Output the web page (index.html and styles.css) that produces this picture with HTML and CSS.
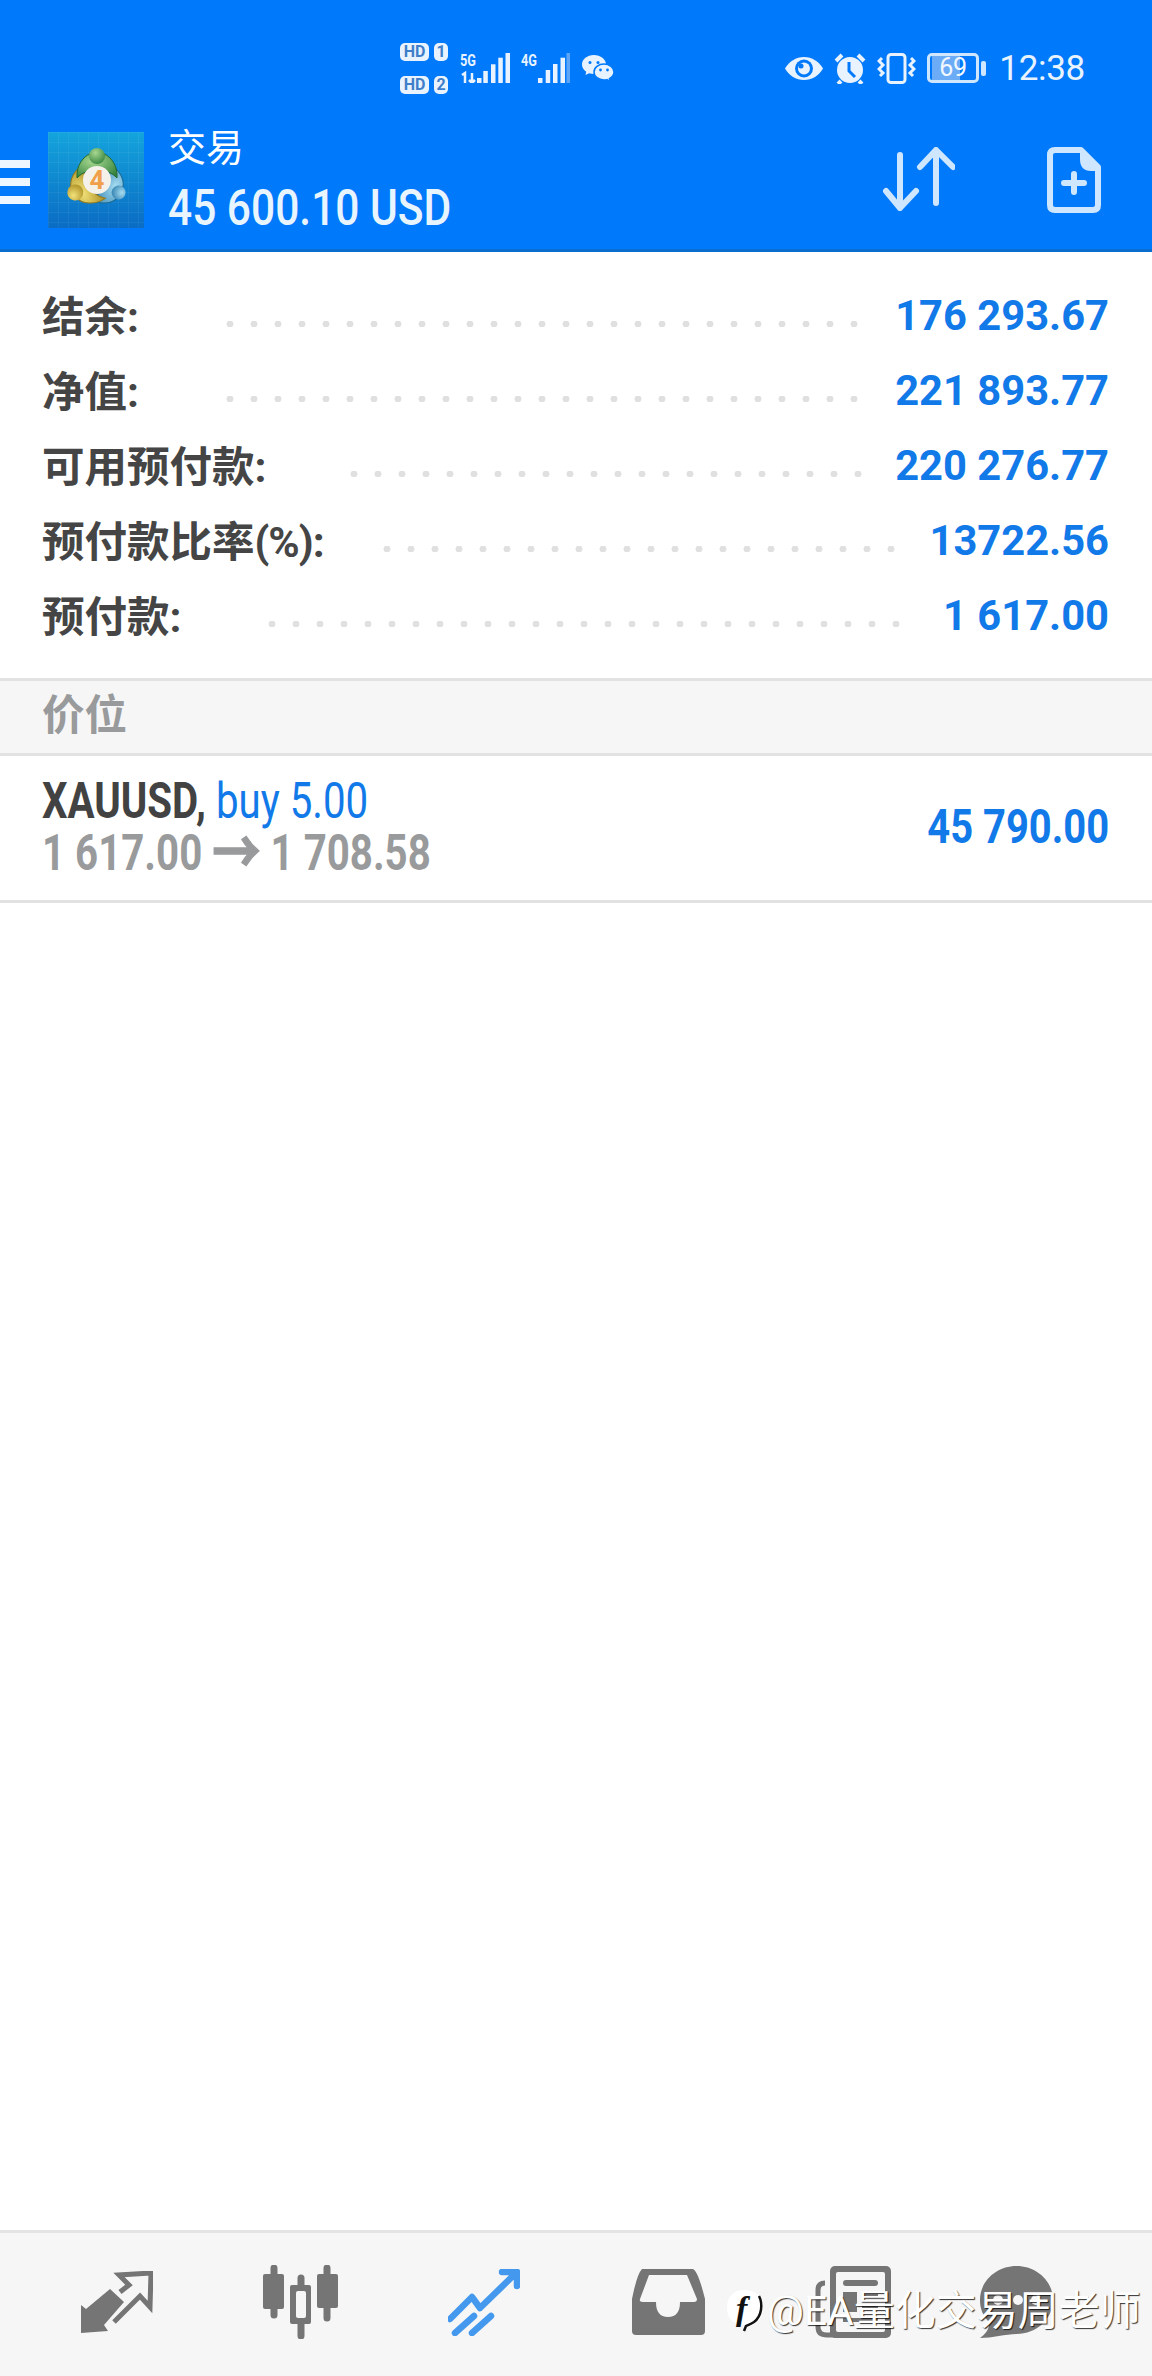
FILE: index.html
```html
<!DOCTYPE html>
<html lang="zh-CN">
<head>
  <meta charset="UTF-8">
  <title>交易</title>
  <link rel="stylesheet" href="styles.css">
</head>
<body>
  <header class="top">
    <div class="status">
      <div class="hd-col">
        <div class="hd-row"><span class="hd">HD</span><span class="sim">1</span></div>
        <div class="hd-row"><span class="hd">HD</span><span class="sim">2</span></div>
      </div>
      <svg class="signal" width="50" height="34" viewBox="0 -4 50 34">
        <text class="net" x="0" y="13" textLength="16" lengthAdjust="spacingAndGlyphs">5G</text>
        <path class="data" d="M2 22l3-2v10M12 20v10l-3-3M12 30l3-3"/>
        <rect x="17" y="25" width="4.5" height="5"/><rect x="23.3" y="18" width="4.5" height="12"/><rect x="31" y="11.3" width="4.5" height="18.7"/><rect x="38.3" y="4.7" width="4.5" height="25.3"/><rect x="45.5" y="0" width="4.5" height="30"/>
      </svg>
      <svg class="signal" width="50" height="34" viewBox="0 -4 50 34">
        <text class="net" x="0" y="13" textLength="16" lengthAdjust="spacingAndGlyphs">4G</text>
        <rect x="17" y="25" width="4.5" height="5"/><rect x="24.7" y="17" width="4.5" height="13"/><rect x="32" y="11" width="4.5" height="19"/><rect x="39.5" y="4.7" width="4.5" height="25.3"/><rect class="dim" x="45.5" y="0" width="3.5" height="30"/>
      </svg>
      <svg class="wechat" width="32" height="27" viewBox="0 0 32 27">
        <path class="ic" d="M12 0C5 0 0 4.300 0 9.500c0 3 1.600 5.500 4.200 7.200L3.500 20l3.600-1.800c1.500.4 3.200.7 4.900.7 6.500 0 12-4.200 12-9.400S18.500 0 12 0z"/>
        <circle class="eye-b" cx="8" cy="7.500" r="1.500"/><circle class="eye-b" cx="16" cy="7.500" r="1.500"/>
        <path class="ic wc2" d="M22 9c-5.500 0-10 3.500-10 8s4.500 8 10 8c1 0 2-.1 3-.4l3 2-.6-3c2.800-1.600 4.600-3.900 4.600-6.600 0-4.500-4.500-8-10-8z"/>
        <circle class="eye-b" cx="18.500" cy="15" r="1.400"/><circle class="eye-b" cx="25.500" cy="15" r="1.400"/>
      </svg>
      <div class="status-right">
        <svg width="38" height="23" viewBox="0 0 38 23">
          <path class="ic" d="M19 0C11 0 4 4.500 0 11.500 4 18.500 11 23 19 23s15-4.500 19-11.500C34 4.500 27 0 19 0z"/>
          <circle class="eye-b" cx="19" cy="11.500" r="9"/>
          <circle class="ic" cx="19" cy="11.500" r="6"/>
          <circle class="eye-b" cx="16" cy="9" r="2.500"/>
        </svg>
        <svg width="32" height="31" viewBox="0 0 32 31">
          <circle class="ic" cx="16" cy="17" r="13"/>
          <path class="alarm-hand" d="M15 9v9l6 6"/>
          <path class="alarm-ear" d="M2 8l6-6M30 8l-6-6M7 28l-3 3M25 28l3 3"/>
        </svg>
        <svg width="39" height="31" viewBox="0 0 39 31">
          <rect class="phone" x="11" y="1.500" width="17" height="28" rx="3"/>
          <path class="buzz" d="M5 5l-3 3 4 4-4 4 4 4-3 3M34 5l3 3-4 4 4 4-4 4 3 3"/>
        </svg>
        <div class="battery-wrap">
          <div class="battery"><span class="level"></span><span class="pct">69</span></div>
          <span class="nub"></span>
        </div>
        <span class="clock">12:38</span>
      </div>
    </div>
    <div class="appbar">
      <div class="burger"><span></span><span></span><span></span></div>
      <svg class="logo" width="96" height="96" viewBox="0 0 96 96">
        <defs>
          <linearGradient id="sky" x1="0" y1="0" x2="0" y2="1">
            <stop offset="0" stop-color="#14a4dc"/><stop offset="1" stop-color="#0a6cc4"/>
          </linearGradient>
          <pattern id="grid" width="10" height="10" patternUnits="userSpaceOnUse">
            <path d="M10 0H0V10" fill="none" stroke="#fff" stroke-opacity=".1"/>
          </pattern>
          <radialGradient id="gr" cx=".4" cy=".3" r=".8"><stop offset="0" stop-color="#a8d890"/><stop offset="1" stop-color="#2f7f3a"/></radialGradient>
          <radialGradient id="ye" cx=".4" cy=".3" r=".8"><stop offset="0" stop-color="#f2e27a"/><stop offset="1" stop-color="#a88a1e"/></radialGradient>
          <radialGradient id="bl" cx=".4" cy=".3" r=".8"><stop offset="0" stop-color="#a6dcf2"/><stop offset="1" stop-color="#2a7cac"/></radialGradient>
        </defs>
        <rect width="96" height="96" fill="url(#sky)"/>
        <rect width="96" height="96" fill="url(#grid)"/>
        <g transform="translate(49 48) rotate(120)">
          <path fill="url(#bl)" stroke="#1c6a94" d="M-20-2C-21-15-13-24-7-26-4-20 4-20 7-26 13-24 21-15 20-2 10-13-10-13-20-2Z"/>
          <circle cy="-25" r="7" fill="url(#bl)"/>
        </g>
        <g transform="translate(49 48) rotate(-120)">
          <path fill="url(#ye)" stroke="#94791a" d="M-20-2C-21-15-13-24-7-26-4-20 4-20 7-26 13-24 21-15 20-2 10-13-10-13-20-2Z"/>
          <circle cy="-25" r="8" fill="url(#ye)"/>
        </g>
        <g transform="translate(49 48)">
          <path fill="url(#gr)" stroke="#256b30" d="M-20-2C-21-15-13-24-7-26-4-20 4-20 7-26 13-24 21-15 20-2 10-13-10-13-20-2Z"/>
          <circle cy="-24" r="8" fill="url(#gr)"/>
        </g>
        <circle cx="49" cy="48" r="14" fill="#f4f1ea"/>
        <text class="logo-four" x="49" y="57">4</text>
      </svg>
      <div class="account">
        <div class="title">交易</div>
        <div class="amount"><span class="cond">45 600.10 USD</span></div>
      </div>
      <div class="actions">
        <svg width="73" height="64" viewBox="0 0 73 64">
          <path class="act" d="M18 8V61M4 44L18 61 34 44M54 3V56M38 20L54 3 71 20"/>
        </svg>
        <svg width="54" height="66" viewBox="0 0 54 66">
          <path class="act" d="M34 3H8Q3 3 3 8V58Q3 63 8 63H46Q51 63 51 58V20Z"/>
          <path class="fold" d="M33 3L51 21V24H44Q33 24 33 12Z"/>
          <path class="act" d="M27 27V45M17 36H37"/>
        </svg>
      </div>
    </div>
  </header>

  <main class="main">
    <section class="summary">
      <div class="row"><span class="label">结余:</span><span class="dots"></span><span class="value">176 293.67</span></div>
      <div class="row"><span class="label">净值:</span><span class="dots"></span><span class="value">221 893.77</span></div>
      <div class="row"><span class="label">可用预付款:</span><span class="dots dots-short"></span><span class="value">220 276.77</span></div>
      <div class="row"><span class="label">预付款比率<span class="paren">(%)</span>:</span><span class="dots dots-short dots-tight"></span><span class="value">13722.56</span></div>
      <div class="row"><span class="label">预付款:</span><span class="dots"></span><span class="value">1 617.00</span></div>
    </section>
    <div class="section-head">价位</div>
    <div class="position">
      <div>
        <div class="pos-line"><span class="cond cond-pos"><b>XAUUSD,</b> <span class="side">buy 5.00</span></span></div>
        <div class="pos-line prices"><span class="cond cond-pos">1 617.00 <span class="arrow">→</span> 1 708.58</span></div>
      </div>
      <div class="profit"><span class="cond cond-profit">45 790.00</span></div>
    </div>
  </main>

  <nav class="tabs">
    <svg width="73" height="63" viewBox="0 0 73 63">
      <path class="tab-fill" d="M1 34L6 38 30 18 44 31 24 54 28 60 1 62Z"/>
      <path class="tab-line" d="M40 21L49 14 39 4 71 2 70 36 60 25 34 51"/>
    </svg>
    <svg width="75" height="74" viewBox="0 0 75 74">
      <path class="tab-wick" d="M11 3V50M64 3V53M38 13V71"/>
      <rect class="tab-fill" x="0" y="9" width="21" height="35" rx="2"/>
      <rect class="tab-fill" x="54" y="9" width="21" height="34" rx="2"/>
      <rect class="tab-fill" x="27" y="20" width="21" height="39" rx="2"/>
      <rect class="tab-hole" x="33" y="26" width="10" height="27" rx="2"/>
    </svg>
    <svg width="72" height="67" viewBox="0 0 72 67">
      <path class="tab-active" d="M2 50L24 28 32 39 68 4M54 3H69V17M7 64L26 47M24 64L43 47"/>
    </svg>
    <svg class="tab-tray" width="73" height="66" viewBox="0 0 73 66">
      <path class="tab-fill" d="M10 0H61Q66 2 73 30V62Q73 66 69 66H4Q0 66 0 62V30Q5 5 10 0Z"/>
      <path class="tab-hole" d="M17 6H55L65 30Q65 33 62 33H48Q48 48 36 48 24 48 24 33H11Q7 33 8 30Z"/>
    </svg>
    <svg width="76" height="72" viewBox="0 0 76 72">
      <path class="tab-line" d="M10 17Q3 17 3 24V61Q3 69 12 69H20"/>
      <rect class="tab-fill" x="15" y="0" width="61" height="72" rx="5"/>
      <rect class="tab-hole" x="21" y="6" width="49" height="60" rx="2"/>
      <rect class="tab-fill" x="28" y="14" width="35" height="6" rx="3"/>
      <rect class="tab-fill" x="28" y="26" width="14" height="20"/>
      <rect class="tab-fill" x="47" y="28" width="16" height="4"/>
      <rect class="tab-fill" x="47" y="38" width="16" height="4"/>
      <rect class="tab-fill" x="28" y="52" width="35" height="4"/>
    </svg>
    <svg class="tab-chat" width="73" height="72" viewBox="0 0 73 72">
      <path class="tab-fill" d="M36.500 0C56.500 0 73 15 73 34S56.500 68 36.500 68C26 68 12 72 0 72 6 68 10 62 9 56 3 50 0 43 0 34 0 15 16.500 0 36.500 0Z"/>
      <circle class="tab-hole" cx="18" cy="34" r="5"/><circle class="tab-hole" cx="38" cy="34" r="5"/><circle class="tab-hole" cx="56" cy="34" r="5"/>
    </svg>
    <div class="watermark">
      <svg width="38" height="44" viewBox="0 0 38 44">
        <path class="wm-bubble" d="M18 1C30 1 37 8 37 19 37 30 30 36 22 38L17 43 18 36C7 36 1 29 1 19 1 8 7 1 18 1Z"/>
        <path class="wm-edge" d="M33 7C37 15 36 27 28 33 25 35 22 36 20 37L18 42"/>
        <text class="wm-f" x="10" y="31">f</text>
      </svg>
      <span>@EA量化交易周老师</span>
    </div>
  </nav>
</body>
</html>
```

FILE: styles.css
```css
* {
  box-sizing: border-box;
}
html, body {
  margin: 0;
  height: 100%;
}
body {
  display: flex;
  flex-direction: column;
  width: 1152px;
  height: 2376px;
  overflow: hidden;
  background: #fff;
  font-family: Roboto, "Noto Sans CJK SC", sans-serif;
}

/* top blue area */
.top {
  height: 252px;
  background: #0079fb;
  border-bottom: 3px solid #0a6ccf;
  color: #fff;
}
.status {
  display: flex;
  align-items: center;
  height: 120px;
  padding: 16px 67px 0 400px;
}
.hd-col {
  display: flex;
  flex-direction: column;
  gap: 15px;
  width: 48px;
  margin-right: 12px;
}
.hd-row {
  display: flex;
  gap: 5px;
}
.hd, .sim {
  display: block;
  height: 18px;
  background: #e8f3ff;
  border-radius: 5px;
  color: #3f7fc9;
  font-size: 16px;
  font-weight: 700;
  line-height: 18px;
  text-align: center;
}
.hd {
  width: 29px;
}
.sim {
  width: 14px;
}
.signal {
  margin: -4px 11px 0 0;
  fill: #e8f3ff;
}
.net {
  font-size: 16px;
  font-weight: 700;
  fill: #e8f3ff;
}
.data {
  fill: none;
  stroke: #e8f3ff;
  stroke-width: 2.500;
}
.dim {
  fill: #5ea6f5;
}
.ic {
  fill: #e8f3ff;
}
.eye-b {
  fill: #0079fb;
}
.wc2 {
  stroke: #0079fb;
  stroke-width: 1.500;
}
.status-right {
  display: flex;
  align-items: center;
  gap: 11px;
  margin-left: auto;
}
.alarm-hand {
  fill: none;
  stroke: #0079fb;
  stroke-width: 3;
}
.alarm-ear {
  fill: none;
  stroke: #e8f3ff;
  stroke-width: 4;
}
.phone, .buzz {
  fill: none;
  stroke: #e8f3ff;
  stroke-width: 3;
}
.battery-wrap {
  display: flex;
  align-items: center;
  gap: 2px;
  margin-right: 2px;
}
.battery {
  position: relative;
  width: 52px;
  height: 30px;
  border: 3px solid #cfe6ff;
  border-radius: 5px;
}
.level {
  display: block;
  width: 28px;
  height: 100%;
  margin-left: 2px;
  background: #6cacf6;
}
.pct {
  position: absolute;
  top: -1px;
  left: 9px;
  font-size: 25px;
  line-height: 26px;
  letter-spacing: -.5px;
  color: #f2f8ff;
}
.nub {
  width: 5px;
  height: 15px;
  background: #cfe6ff;
  border-radius: 2px;
}
.clock {
  font-size: 35px;
  letter-spacing: -.3px;
  color: #e8f3ff;
}

.appbar {
  display: flex;
  align-items: flex-start;
  height: 129px;
  padding-top: 12px;
}
.burger {
  display: flex;
  flex-direction: column;
  gap: 10px;
  width: 30px;
  margin: 28px 18px 0 0;
}
.burger span {
  height: 8px;
  background: #eef6ff;
}
.logo {
  flex: none;
}
.account {
  margin: -7px 0 0 24px;
}
.title {
  height: 46px;
  margin-bottom: 7px;
  font-size: 38px;
  line-height: 46px;
}
.amount {
  height: 60px;
  font-size: 50px;
  font-weight: 500;
  line-height: 60px;
  color: #e8f5ff;
  white-space: nowrap;
}
.cond {
  display: inline-block;
  transform: scaleX(.85);
  transform-origin: left center;
}
.actions {
  display: flex;
  align-items: flex-start;
  gap: 92px;
  margin: 15px 51px 0 auto;
}
.act {
  fill: none;
  stroke: #cfe6ff;
  stroke-width: 6;
  stroke-linecap: round;
  stroke-linejoin: round;
}
.fold {
  fill: #cfe6ff;
}

/* account summary */
.main {
  flex: 1;
}
.summary {
  padding: 26px 43px 25px 42px;
}
.row {
  display: flex;
  align-items: center;
  height: 75px;
}
.label {
  padding-bottom: 4px;
  font-size: 42.500px;
  font-weight: 700;
  color: #454545;
  white-space: nowrap;
}
.paren {
  letter-spacing: -1px;
}
.dots {
  width: 648px;
  height: 6px;
  margin: 16px 0 0 79px;
  background: radial-gradient(circle at 12px 3px, #e0e0e0 3.200px, transparent 3.800px) 0 0 / 24px 6px repeat-x;
}
.dots-short {
  width: 528px;
  margin-left: 76px;
}
.dots-tight {
  margin-left: 50px;
}
.value {
  margin-left: auto;
  font-size: 41.700px;
  font-weight: 700;
  color: #1279e8;
}

.section-head {
  height: 78px;
  padding-left: 42px;
  background: #f6f6f6;
  border-top: 3px solid #e2e2e2;
  border-bottom: 3px solid #e2e2e2;
  font-size: 42.500px;
  font-weight: 700;
  line-height: 70px;
  color: #999a9c;
}
.position {
  display: flex;
  align-items: center;
  justify-content: space-between;
  height: 147px;
  padding: 0 43px 3px 42px;
  border-bottom: 3px solid #e2e2e2;
}
.pos-line {
  height: 52px;
  font-size: 50px;
  line-height: 52px;
  white-space: nowrap;
}
.cond-pos {
  transform: scaleX(.805);
}
.pos-line b {
  color: #424242;
}
.side {
  color: #1279e8;
}
.prices {
  font-weight: 700;
  color: #999a9c;
}
.arrow {
  font-size: 60px;
  line-height: 40px;
  vertical-align: -4px;
  -webkit-text-stroke: 1.500px #999a9c;
}
.profit {
  font-size: 49px;
  font-weight: 700;
  color: #1279e8;
  white-space: nowrap;
}
.cond-profit {
  transform: scaleX(.815);
  transform-origin: right center;
}

/* bottom tabs */
.tabs {
  position: relative;
  display: flex;
  align-items: center;
  gap: 110px;
  height: 146px;
  padding: 0 0 5px 80px;
  background: #f6f6f6;
  border-top: 3px solid #e4e4e4;
}
.tabs svg {
  flex: none;
}
.tab-fill {
  fill: #757575;
}
.tab-hole {
  fill: #f6f6f6;
}
.tab-line {
  fill: none;
  stroke: #757575;
  stroke-width: 5;
}
.tab-wick {
  fill: none;
  stroke: #757575;
  stroke-width: 7;
  stroke-linecap: round;
}
.tab-active {
  fill: none;
  stroke: #4499ee;
  stroke-width: 6.500;
  stroke-linecap: round;
  stroke-linejoin: round;
}
.tab-tray {
  margin-left: 2px;
}
.tab-chat {
  margin-left: -21px;
}
.watermark {
  position: absolute;
  top: 56px;
  left: 726px;
  display: flex;
  align-items: center;
  gap: 3px;
  font-size: 41px;
  line-height: 44px;
  color: #fff;
  text-shadow: 1px 1px 1px rgba(0, 0, 0, .8);
  white-space: nowrap;
}
.wm-bubble {
  fill: #fff;
}
.wm-edge {
  fill: none;
  stroke: #111;
  stroke-width: 2.500;
}
.wm-f {
  font-family: "Liberation Serif", serif;
  font-size: 34px;
  font-style: italic;
  font-weight: 700;
  fill: #111;
  text-shadow: none;
}
.logo-four {
  font-size: 26px;
  font-weight: 700;
  fill: #f0a04a;
  text-anchor: middle;
}
```
